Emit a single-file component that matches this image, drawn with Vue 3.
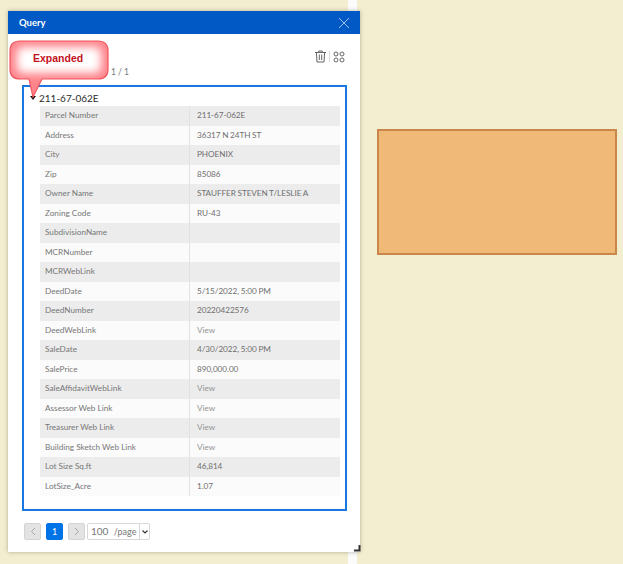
<script setup>
const rows = [
  { label: 'Parcel Number', value: '211-67-062E' },
  { label: 'Address', value: '36317 N 24TH ST' },
  { label: 'City', value: 'PHOENIX' },
  { label: 'Zip', value: '85086' },
  { label: 'Owner Name', value: 'STAUFFER STEVEN T/LESLIE A' },
  { label: 'Zoning Code', value: 'RU-43' },
  { label: 'SubdivisionName', value: '' },
  { label: 'MCRNumber', value: '' },
  { label: 'MCRWebLink', value: '' },
  { label: 'DeedDate', value: '5/15/2022, 5:00 PM' },
  { label: 'DeedNumber', value: '20220422576' },
  { label: 'DeedWebLink', value: 'View', link: true },
  { label: 'SaleDate', value: '4/30/2022, 5:00 PM' },
  { label: 'SalePrice', value: '890,000.00' },
  { label: 'SaleAffidavitWebLink', value: 'View', link: true },
  { label: 'Assessor Web Link', value: 'View', link: true },
  { label: 'Treasurer Web Link', value: 'View', link: true },
  { label: 'Building Sketch Web Link', value: 'View', link: true },
  { label: 'Lot Size Sq.ft', value: '46,814' },
  { label: 'LotSize_Acre', value: '1.07' }
]
</script>

<template>
  <div class="canvas">
    <div class="side-strip"></div>

    <div class="parcel"></div>

    <section class="panel">
      <header class="panel-head">
        <span class="panel-title">Query</span>
        <svg class="close" width="12" height="12" viewBox="0 0 12 12">
          <path d="M1 1 L11 11 M11 1 L1 11" stroke="#9fc0ea" stroke-width="1" fill="none" />
        </svg>
      </header>

      <div class="panel-body">
        <div class="toolbar">
          <span class="count">1 / 1</span>
          <div class="tools">
            <svg width="11" height="13" viewBox="0 0 11 13" fill="none" stroke="#666" stroke-width="1">
              <path d="M0 2.5 H11 M3.7 2.5 V1 H7.3 V2.5 M1.4 2.5 L2 12 H9 L9.6 2.5 M4.3 4.5 V10 M6.7 4.5 V10" />
            </svg>
            <span class="tool-sep"></span>
            <svg width="12" height="12" viewBox="0 0 12 12" fill="none" stroke="#666" stroke-width="1">
              <circle cx="3" cy="3" r="2" />
              <circle cx="9" cy="3" r="2" />
              <circle cx="3" cy="9" r="2" />
              <circle cx="9" cy="9" r="2" />
            </svg>
          </div>
        </div>

        <div class="result-box">
          <div class="result-title">
            <span class="caret"></span>
            <span>211-67-062E</span>
          </div>
          <div class="table">
            <div v-for="row in rows" :key="row.label" class="row">
              <div class="cell cell-label">{{ row.label }}</div>
              <div class="cell cell-value" :class="{ link: row.link }">{{ row.value }}</div>
            </div>
          </div>
        </div>

        <div class="pager">
          <button class="page-btn muted">
            <svg width="6" height="9" viewBox="0 0 6 9"><path d="M5 1 L1.5 4.5 L5 8" fill="none" stroke="#a5a5a5" /></svg>
          </button>
          <button class="page-btn current">1</button>
          <button class="page-btn muted">
            <svg width="6" height="9" viewBox="0 0 6 9"><path d="M1 1 L4.5 4.5 L1 8" fill="none" stroke="#a5a5a5" /></svg>
          </button>
          <div class="page-size">
            <span class="size-text"><span class="size-num">100</span> /page</span>
            <span class="size-arrow">
              <svg width="6" height="4" viewBox="0 0 6 4"><path d="M0.5 0.5 L3 3 L5.5 0.5" fill="none" stroke="#333" stroke-width="1.1" /></svg>
            </span>
          </div>
        </div>
      </div>

      <svg class="grip" width="7" height="7" viewBox="0 0 7 7">
        <path d="M5.5 0 V5.5 H0" fill="none" stroke="#333" stroke-width="2" />
      </svg>
    </section>

    <div class="callout">
      <svg width="104" height="62" viewBox="0 0 104 62">
        <defs>
          <filter id="soft" x="-30%" y="-50%" width="160%" height="200%">
            <feGaussianBlur stdDeviation="4" />
          </filter>
          <clipPath id="bubble">
            <path d="M11 1 H89 Q99 1 99 11 V29 Q99 39 89 39 H33 L24 57 L20 39 H11 Q1 39 1 29 V11 Q1 1 11 1 Z" />
          </clipPath>
        </defs>
        <path d="M11 1 H89 Q99 1 99 11 V29 Q99 39 89 39 H33 L24 57 L20 39 H11 Q1 39 1 29 V11 Q1 1 11 1 Z" fill="#ff858c" />
        <g clip-path="url(#bubble)">
          <rect x="8" y="7" width="84" height="26" rx="6" fill="#fff" filter="url(#soft)" />
        </g>
        <path d="M11 1 H89 Q99 1 99 11 V29 Q99 39 89 39 H33 L24 57 L20 39 H11 Q1 39 1 29 V11 Q1 1 11 1 Z" fill="none" stroke="#f2545d" stroke-width="1.2" />
      </svg>
      <span class="callout-text">Expanded</span>
    </div>
  </div>
</template>

<style>
html, body {
  margin: 0;
  background: #f3eecf;
}
</style>

<style scoped>
.canvas {
  position: relative;
  width: 623px;
  height: 564px;
  overflow: hidden;
  background: #f3eecf;
  font-family: Lato, "Open Sans", sans-serif;
}

.side-strip {
  position: absolute;
  left: 348px;
  top: 0;
  width: 9px;
  height: 564px;
  background: #fbfbfb;
}

.parcel {
  position: absolute;
  left: 377px;
  top: 129px;
  width: 240px;
  height: 126px;
  box-sizing: border-box;
  background: #f0b978;
  border: 2px solid #c98649;
}

.panel {
  position: absolute;
  left: 8px;
  top: 11px;
  width: 352px;
  height: 541px;
  background: #fff;
  box-shadow: 0 0 4px rgba(90, 90, 70, 0.45);
  display: flex;
  flex-direction: column;
}

.panel-head {
  height: 23px;
  background: #0059c5;
  display: flex;
  align-items: center;
  justify-content: space-between;
  padding: 0 10px 0 11px;
  flex-shrink: 0;
}

.panel-title {
  color: #fff;
  font-size: 9.5px;
  font-weight: 700;
}

.panel-body {
  flex: 1;
  display: flex;
  flex-direction: column;
  padding: 0 13px 0 14px;
}

.toolbar {
  height: 51px;
  position: relative;
  flex-shrink: 0;
}

.count {
  position: absolute;
  left: 89px;
  top: 33px;
  font-size: 8.5px;
  color: #777;
}

.tools {
  position: absolute;
  right: 2px;
  top: 16px;
  display: flex;
  align-items: center;
  gap: 3px;
}

.tool-sep {
  width: 1px;
  height: 11px;
  background: #dcdcdc;
}

.result-box {
  height: 426px;
  box-sizing: border-box;
  border: 2px solid #1a76e0;
  padding: 3px 5px 0 16px;
  flex-shrink: 0;
}

.result-title {
  height: 16px;
  padding-bottom: 1px;
  box-sizing: border-box;
  display: flex;
  align-items: center;
  gap: 3px;
  margin-left: -10px;
  font-size: 10px;
  color: #2b2b2b;
}

.caret {
  width: 0;
  height: 0;
  border-left: 3.5px solid transparent;
  border-right: 3.5px solid transparent;
  border-top: 4px solid #111;
}

.table {
  display: flex;
  flex-direction: column;
}

.row {
  display: grid;
  grid-template-columns: 150px 1fr;
  height: 19.5px;
  background: #fbfbfb;
}

.row:nth-child(odd) {
  background: #ececec;
}

.cell {
  display: flex;
  align-items: center;
  padding-bottom: 1px;
  box-sizing: border-box;
  font-size: 8.2px;
  color: #6f6f6f;
}

.cell-label {
  padding-left: 5px;
  border-right: 1px solid #e2e2e2;
  color: #777;
}

.cell-value {
  padding-left: 7px;
  letter-spacing: -0.05px;
  word-spacing: -0.4px;
}

.cell-value.link {
  color: #949494;
}

.pager {
  display: flex;
  align-items: center;
  gap: 5px;
  margin-top: 12px;
  margin-left: 2px;
}

.page-btn {
  width: 17px;
  height: 17px;
  padding: 0;
  border-radius: 2px;
  border: 1px solid #d4d4d4;
  display: flex;
  align-items: center;
  justify-content: center;
  font-family: inherit;
  font-size: 9px;
}

.page-btn.muted {
  background: #e3e3e3;
}

.page-btn.current {
  background: #0073e6;
  border-color: #0073e6;
  color: #fff;
}

.page-size {
  display: flex;
  height: 17px;
  box-sizing: border-box;
  border: 1px solid #d8d8d8;
  border-radius: 2px;
  margin-left: -3px;
  background: #fff;
}

.size-text {
  width: 51px;
  padding-left: 3px;
  box-sizing: border-box;
  font-size: 9px;
  line-height: 15px;
  color: #777;
  white-space: nowrap;
}

.size-num {
  font-size: 10px;
  margin-right: 3px;
}

.size-arrow {
  width: 9px;
  border-left: 1px solid #d8d8d8;
  display: flex;
  align-items: center;
  justify-content: center;
}

.grip {
  position: absolute;
  right: -1px;
  bottom: 0;
}

.callout {
  position: absolute;
  left: 9px;
  top: 40px;
  width: 104px;
  height: 62px;
}

.callout svg {
  display: block;
}

.callout-text {
  position: absolute;
  left: 24px;
  top: 12px;
  font-family: "Liberation Sans", Arial, sans-serif;
  font-size: 10.5px;
  font-weight: 700;
  color: #c4101c;
}
</style>
